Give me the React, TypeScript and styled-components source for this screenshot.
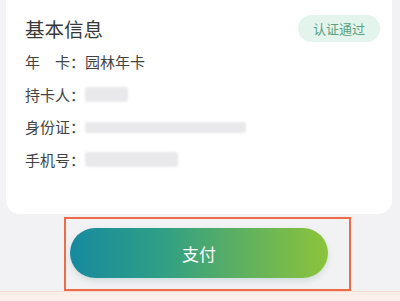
import React from "react";
import styled, { createGlobalStyle } from "styled-components";

const Global = createGlobalStyle`
  html, body { margin: 0; padding: 0; }
  body {
    font-family: "Noto Sans CJK SC", "Noto Sans", sans-serif;
    background: #f2f2f4;
  }
`;

const Page = styled.div`
  width: 400px;
  height: 301px;
  display: flex;
  flex-direction: column;
  background: #f2f2f4;
  overflow: hidden;
`;

const Card = styled.section`
  margin: 0 8px 0 6px;
  height: 214px;
  box-sizing: border-box;
  padding: 15px 12px 0 19px;
  background: #ffffff;
  border-radius: 0 0 14px 14px;
  display: flex;
  flex-direction: column;
`;

const Header = styled.div`
  display: flex;
  align-items: center;
  justify-content: space-between;
  height: 27px;
  margin-bottom: 10px;
`;

const Title = styled.h2`
  margin: 0;
  font-size: 19.5px;
  font-weight: 400;
  color: #383838;
  line-height: 27px;
`;

const Badge = styled.span`
  display: inline-flex;
  align-items: center;
  justify-content: center;
  height: 27px;
  width: 82px;
  border-radius: 14px;
  background: #e2f4ec;
  color: #5c9f80;
  font-size: 13px;
`;

const Rows = styled.div`
  display: flex;
  flex-direction: column;
  gap: 12.5px;
`;

const Row = styled.div`
  display: flex;
  align-items: center;
  height: 20px;
  font-size: 15px;
  color: #424242;
  line-height: 20px;
`;

const Label = styled.span`
  width: 60px;
  white-space: pre;
`;

const Blur = styled.span<{ $w: number; $h: number }>`
  display: inline-block;
  width: ${(p) => p.$w}px;
  height: ${(p) => p.$h}px;
  background: #e9e9eb;
  border-radius: 3px;
  filter: blur(1.2px);
`;

const Footer = styled.div`
  margin: 3px 0 0 64px;
  width: 287px;
  height: 74px;
  box-sizing: border-box;
  border: 2px solid #ee6c47;
  padding: 9px 21px 11px 4px;
`;

const PayButton = styled.button`
  width: 100%;
  height: 50px;
  border: none;
  border-radius: 25px;
  background: linear-gradient(90deg, #168a9f 0%, #2f9f86 35%, #63b25c 70%, #8cc43a 100%);
  color: #ffffff;
  font-family: inherit;
  font-size: 17px;
  box-shadow: 0 3px 6px rgba(60, 120, 110, 0.18);
  cursor: pointer;
`;

const BottomStrip = styled.div`
  margin-top: auto;
  height: 9px;
  background: #fcefea;
  border-top: 1px solid #f8d9cf;
`;

export default function App() {
  return (
    <Page>
      <Global />
      <Card>
        <Header>
          <Title>基本信息</Title>
          <Badge>认证通过</Badge>
        </Header>
        <Rows>
          <Row>
            <Label>年　卡：</Label>
            <span>园林年卡</span>
          </Row>
          <Row>
            <Label>持卡人：</Label>
            <Blur $w={43} $h={15} />
          </Row>
          <Row>
            <Label>身份证：</Label>
            <Blur $w={161} $h={11} />
          </Row>
          <Row>
            <Label>手机号：</Label>
            <Blur $w={93} $h={15} />
          </Row>
        </Rows>
      </Card>
      <Footer>
        <PayButton>支付</PayButton>
      </Footer>
      <BottomStrip />
    </Page>
  );
}
